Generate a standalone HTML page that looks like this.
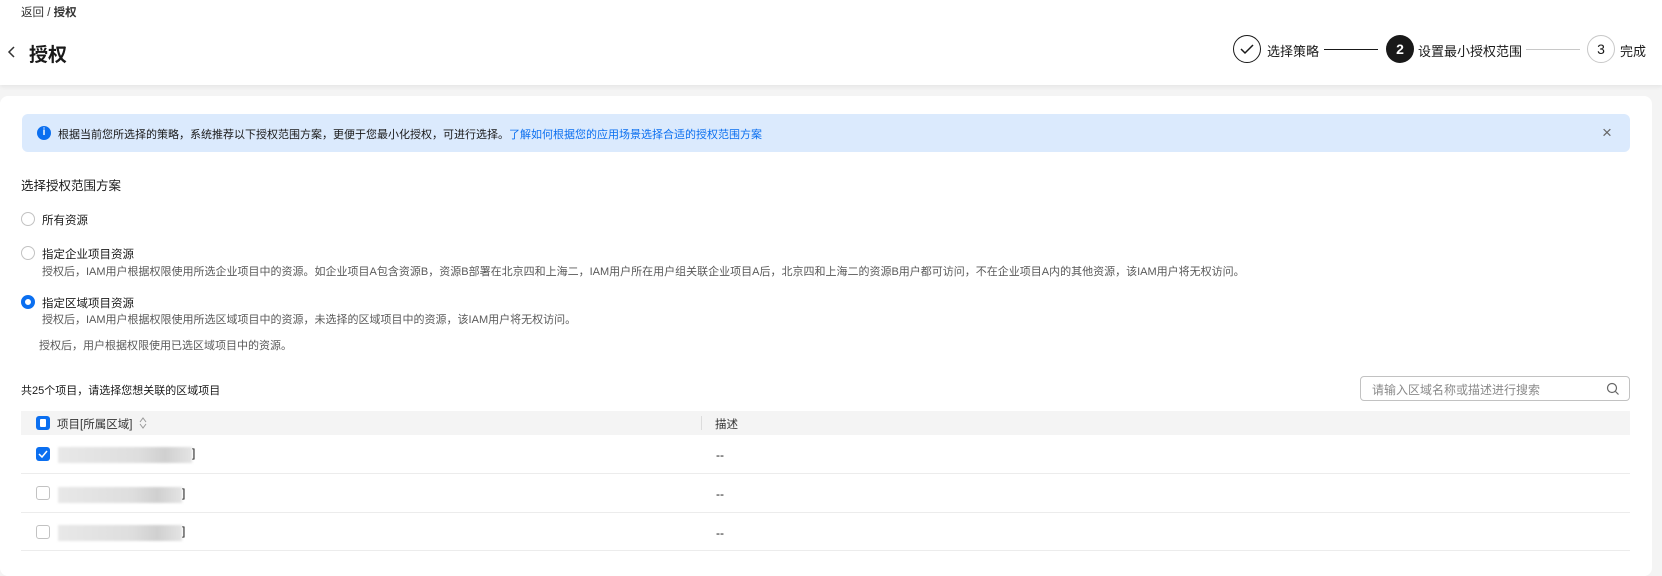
<!DOCTYPE html>
<html><head><meta charset="utf-8"><style>
*{box-sizing:border-box;margin:0;padding:0}
body{width:1662px;height:556px;overflow:hidden;background:#f4f4f4;font-family:"Liberation Sans","Noto Sans CJK SC",sans-serif;color:#191919;position:relative}
.a{position:absolute;white-space:nowrap}
.hdr{position:absolute;left:0;top:0;width:1662px;height:85px;background:#fff;box-shadow:0 2px 4px rgba(0,0,0,.06)}
.card{position:absolute;left:0;top:96px;width:1652px;height:480px;background:#fff;border-radius:8px}
.circ{position:absolute;width:28px;height:28px;border-radius:50%;text-align:center;line-height:26px;font-size:14px}
.radio{position:absolute;width:14px;height:14px;border:1px solid #c2c2c2;border-radius:50%;background:#fff}
.desc{font-size:11px;color:#595959}
.cb{position:absolute;width:14px;height:14px;border:1px solid #c2c2c2;border-radius:3px;background:#fff}
.blur{position:absolute;height:16px;background:linear-gradient(90deg,#e8e8e8,#dedede 60%,#d0d0d0 80%,#e4e4e4);filter:blur(1px)}
.row{position:absolute;left:21px;width:1609px;border-bottom:1px solid #ececec}
</style></head><body>
<div class="hdr"></div>
<div class="a" style="left:21px;top:4px;font-size:11.5px;color:#333">返回 / <b>授权</b></div>
<svg class="a" style="left:7px;top:45px" width="10" height="14" viewBox="0 0 10 14"><path d="M7 2 L2 7 L7 12" stroke="#333" stroke-width="1.5" fill="none"/></svg>
<div class="a" style="left:29px;top:40px;font-size:19px;font-weight:bold">授权</div>

<div class="circ" style="left:1233px;top:35px;border:1.5px solid #191919"><svg width="14" height="12" viewBox="0 0 14 12" style="margin-top:7px"><path d="M1 6 L5 10 L13 2" stroke="#191919" stroke-width="1.5" fill="none"/></svg></div>
<div class="a" style="left:1267px;top:41px;font-size:13px">选择策略</div>
<div class="a" style="left:1324px;top:49px;width:54px;height:1px;background:#191919"></div>
<div class="circ" style="left:1386px;top:35px;background:#191919;color:#fff;font-weight:bold;line-height:28px">2</div>
<div class="a" style="left:1418px;top:41px;font-size:13px">设置最小授权范围</div>
<div class="a" style="left:1526px;top:49px;width:54px;height:1px;background:#c8c8c8"></div>
<div class="circ" style="left:1587px;top:35px;border:1px solid #c8c8c8">3</div>
<div class="a" style="left:1620px;top:41px;font-size:13px">完成</div>

<div class="card"></div>
<div class="a" style="left:22px;top:114px;width:1608px;height:38px;background:#dbeafd;border-radius:6px"></div>
<div class="a" style="left:37px;top:126px;width:14px;height:14px;border-radius:50%;background:#0b6ff0;color:#fff;font-size:10px;font-weight:bold;text-align:center;line-height:14px">i</div>
<div class="a" style="left:58px;top:126px;font-size:11px">根据当前您所选择的策略，系统推荐以下授权范围方案，更便于您最小化授权，可进行选择。<span style="color:#0b6ff0">了解如何根据您的应用场景选择合适的授权范围方案</span></div>
<div class="a" style="left:1602px;top:123px;font-size:17px;color:#666">×</div>

<div class="a" style="left:21px;top:175px;font-size:12.5px">选择授权范围方案</div>

<div class="radio" style="left:21px;top:212px"></div>
<div class="a" style="left:42px;top:212px;font-size:11.5px">所有资源</div>
<div class="radio" style="left:21px;top:246px"></div>
<div class="a" style="left:42px;top:246px;font-size:11.5px">指定企业项目资源</div>
<div class="a desc" style="left:42px;top:263px">授权后，IAM用户根据权限使用所选企业项目中的资源。如企业项目A包含资源B，资源B部署在北京四和上海二，IAM用户所在用户组关联企业项目A后，北京四和上海二的资源B用户都可访问，不在企业项目A内的其他资源，该IAM用户将无权访问。</div>
<div class="radio" style="left:21px;top:295px;border:4px solid #0b6ff0"></div>
<div class="a" style="left:42px;top:295px;font-size:11.5px">指定区域项目资源</div>
<div class="a desc" style="left:42px;top:311px">授权后，IAM用户根据权限使用所选区域项目中的资源，未选择的区域项目中的资源，该IAM用户将无权访问。</div>
<div class="a desc" style="left:39px;top:337px">授权后，用户根据权限使用已选区域项目中的资源。</div>

<div class="a" style="left:21px;top:382px;font-size:11px">共25个项目，请选择您想关联的区域项目</div>
<div class="a" style="left:1360px;top:376px;width:270px;height:25px;border:1px solid #c2c2c2;border-radius:4px"></div>
<div class="a" style="left:1372px;top:381px;font-size:12px;color:#8a8a8a">请输入区域名称或描述进行搜索</div>
<svg class="a" style="left:1606px;top:382px" width="14" height="14" viewBox="0 0 14 14"><circle cx="6" cy="6" r="4.5" stroke="#666" fill="none" stroke-width="1.2"/><path d="M9.5 9.5 L12.5 12.5" stroke="#666" stroke-width="1.2"/></svg>

<div class="a" style="left:21px;top:411px;width:1609px;height:24px;background:#f4f4f4"></div>
<div class="a" style="left:36px;top:416px;width:14px;height:14px;border-radius:3px;background:#0b6ff0"><div style="position:absolute;left:4px;top:3px;width:6px;height:8px;background:#fff;border-radius:1px"></div></div>
<div class="a" style="left:57px;top:416px;font-size:11.5px;color:#333">项目[所属区域]</div>
<svg class="a" style="left:138px;top:416px" width="10" height="14" viewBox="0 0 10 14"><path d="M2 6 L5 2 L8 6 M2 8 L5 12 L8 8" stroke="#999" fill="none"/></svg>
<div class="a" style="left:701px;top:416px;width:1px;height:14px;background:#dcdcdc"></div>
<div class="a" style="left:715px;top:416px;font-size:11.5px;color:#333">描述</div>

<div class="row" style="top:435px;height:39px"></div>
<div class="row" style="top:474px;height:39px"></div>
<div class="row" style="top:513px;height:38px"></div>
<div class="a" style="left:36px;top:447px;width:14px;height:14px;border-radius:3px;background:#0b6ff0"><svg width="14" height="14" viewBox="0 0 14 14"><path d="M3 7 L6 10 L11 4" stroke="#fff" stroke-width="1.5" fill="none"/></svg></div>
<div class="cb" style="left:36px;top:486px"></div>
<div class="cb" style="left:36px;top:525px"></div>
<div class="blur" style="left:58px;top:447px;width:134px"></div>
<div class="a" style="left:192px;top:446px;font-size:12px">]</div>
<div class="blur" style="left:58px;top:487px;width:124px"></div>
<div class="a" style="left:182px;top:486px;font-size:12px">]</div>
<div class="blur" style="left:58px;top:525px;width:124px"></div>
<div class="a" style="left:182px;top:524px;font-size:12px">]</div>
<div class="a" style="left:716px;top:448px;font-size:12px">--</div>
<div class="a" style="left:716px;top:487px;font-size:12px">--</div>
<div class="a" style="left:716px;top:526px;font-size:12px">--</div>
</body></html>
